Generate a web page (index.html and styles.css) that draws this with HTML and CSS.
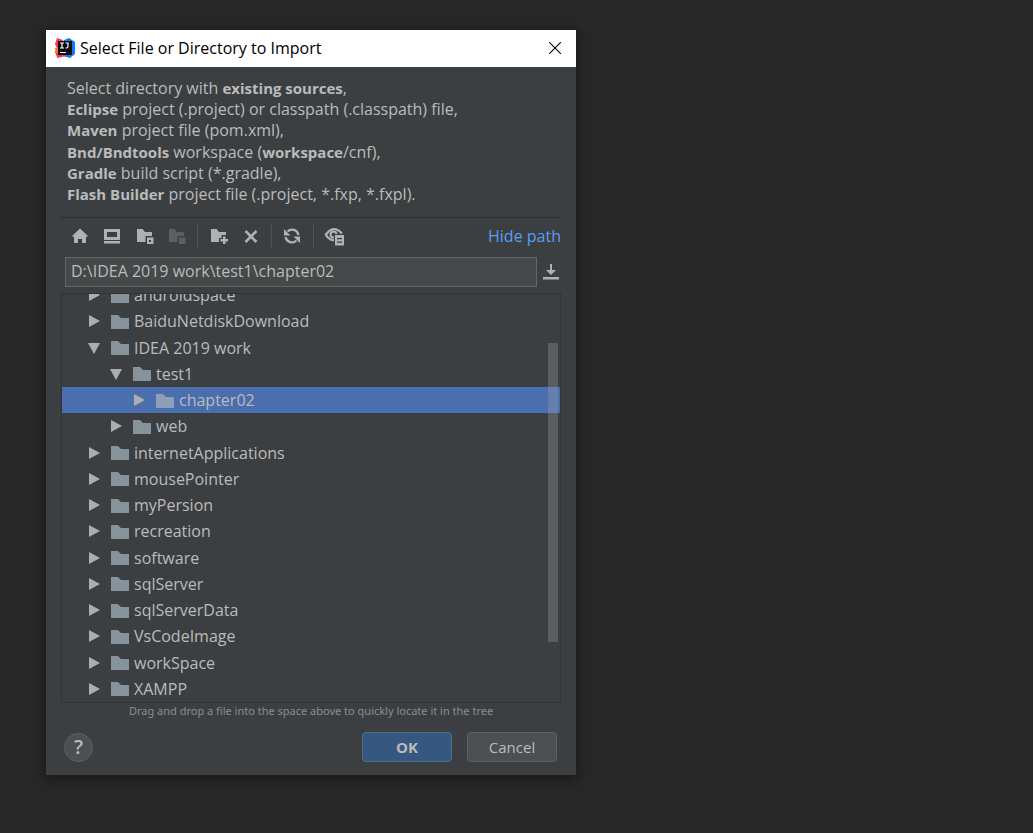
FILE: index.html
```html
<!DOCTYPE html>
<html lang="en">
<head>
<meta charset="utf-8">
<title>Select File or Directory to Import</title>
<link rel="stylesheet" href="styles.css">
</head>
<body>
<svg class="sprite" aria-hidden="true">
  <symbol id="folder" viewBox="0 0 18 15"><path d="M0 1h7l3 3h8v11H0z" fill="currentColor"/></symbol>
  <symbol id="closed" viewBox="0 0 12 12"><path d="M1 0L12 6L1 12z" fill="currentColor"/></symbol>
  <symbol id="open" viewBox="0 0 12 12"><path d="M0 1H12L6 12z" fill="currentColor"/></symbol>
</svg>
<main class="dialog" role="dialog" aria-labelledby="title">
  <header class="titlebar">
    <svg class="logo" viewBox="0 0 20 20" aria-hidden="true">
      <path d="M2 0L8 2L10 10L2 19L0 14L2 10L0 6z" fill="#fe315d"/>
      <path d="M0 10L5 9L4 16L1 15z" fill="#f97a12"/>
      <path d="M9 2L14 0L20 4V16L15 20L8 18z" fill="#087cfa"/>
      <path d="M2 15L9 14L11 18L2 20z" fill="#fe315d"/>
      <path d="M3 3h14v14H3z" fill="#0b0b0b"/>
      <path d="M5 5h4M7 5v5M5 10h4M10.500 5h3M13 5v3.500q0 1.500-1.500 1.500H10.500M5 14.500h6" fill="none" stroke="#fff" stroke-width="1.200"/>
    </svg>
    <h1 class="title" id="title">Select File or Directory to Import</h1>
    <button class="close" type="button" aria-label="Close"><svg width="12" height="12" viewBox="0 0 12 12"><path d="M0 0L12 12M12 0L0 12" stroke="#000" stroke-width="1.100"/></svg></button>
  </header>
  <div class="content">
    <div class="intro">
      <div>Select directory with <b>existing sources</b>,</div>
      <div><b>Eclipse</b> project (.project) or classpath (.classpath) file,</div>
      <div><b>Maven</b> project file (pom.xml),</div>
      <div><b>Bnd/Bndtools</b> workspace (<b>workspace</b>/cnf),</div>
      <div><b>Gradle</b> build script (*.gradle),</div>
      <div><b>Flash Builder</b> project file (.project, *.fxp, *.fxpl).</div>
    </div>
    <div class="toolbar">
      <button class="tool" type="button" aria-label="Home"><svg viewBox="0 0 20 20"><path d="M10 2.500L18.500 10.500H16V17H12V13H8V17H4V10.500H1.500z" fill="currentColor"/></svg></button>
      <button class="tool" type="button" aria-label="Desktop"><svg viewBox="0 0 20 20"><path fill-rule="evenodd" d="M2 3H18V14H2zM5 6V11H15V6zM2 15H18V17.500H2z" fill="currentColor"/></svg></button>
      <button class="tool" type="button" aria-label="Project directory"><svg viewBox="0 0 20 20"><path d="M3 3H8.500L11 6H18V10H11.500V16H3z" fill="currentColor"/><path fill-rule="evenodd" d="M13 11.500H19.500V18H13zM15 14V16H17V14z" fill="currentColor"/></svg></button>
      <button class="tool" type="button" aria-label="Module directory" disabled><svg viewBox="0 0 20 20"><path d="M3 3H8.500L11 6H18V10H11.500V16H3z" fill="currentColor"/><path d="M13 11.500H19.500V18H13z" fill="currentColor"/></svg></button>
      <span class="divider"></span>
      <button class="tool" type="button" aria-label="New folder"><svg viewBox="0 0 20 20"><path d="M3 3H8.500L11 6H18V9H13.500V12H11V16H3z" fill="currentColor"/><path d="M15 10.500H17.500V13H20V15.500H17.500V18H15V15.500H12.500V13H15z" fill="currentColor"/></svg></button>
      <button class="tool" type="button" aria-label="Delete"><svg viewBox="0 0 20 20"><path d="M5.500 5L16.500 16M16.500 5L5.500 16" stroke="currentColor" stroke-width="2.600"/></svg></button>
      <span class="divider"></span>
      <button class="tool" type="button" aria-label="Refresh"><svg viewBox="0 0 20 20"><path d="M5.500 5.500A6.500 6.500 0 0 1 16.500 9M14.500 14.500A6.500 6.500 0 0 1 3.500 11" fill="none" stroke="currentColor" stroke-width="2.300"/><path d="M2 3V9.500H8.500zM18 17V10.500H11.500z" fill="currentColor"/></svg></button>
      <span class="divider"></span>
      <button class="tool" type="button" aria-label="Show hidden files"><svg viewBox="0 0 20 20"><path d="M1.500 9Q9.500-2 18 7.500" fill="none" stroke="currentColor" stroke-width="2.200"/><path d="M1.500 8Q4 13.500 10 14.500" fill="none" stroke="currentColor" stroke-width="2.200"/><path d="M10 11.500A3 3 0 1 1 12.500 8" fill="none" stroke="currentColor" stroke-width="2.200"/><path fill-rule="evenodd" d="M11 9H20V19.500H11zM13 12V13.200H18V12zM13 15.500V16.700H18V15.500z" fill="currentColor"/></svg></button>
      <a class="path-link" href="#path">Hide path</a>
    </div>
    <div class="path-row">
      <input class="path" id="path" type="text" aria-label="Path" value="D:\IDEA 2019 work\test1\chapter02">
      <button class="history" type="button" aria-label="Recent paths"><svg width="16" height="16" viewBox="0 0 16 16"><path d="M7 0H9V6H13L8 11L3 6H7zM0 13H16V15.500H0z" fill="currentColor"/></svg></button>
    </div>
    <div class="panel">
      <ul class="tree" role="tree">
        <li class="row" role="treeitem"><svg class="arrow"><use href="#closed"/></svg><svg class="folder"><use href="#folder"/></svg>androidspace</li>
        <li class="row" role="treeitem"><svg class="arrow"><use href="#closed"/></svg><svg class="folder"><use href="#folder"/></svg>BaiduNetdiskDownload</li>
        <li class="row" role="treeitem"><svg class="arrow"><use href="#open"/></svg><svg class="folder"><use href="#folder"/></svg>IDEA 2019 work</li>
        <li class="row level-2" role="treeitem"><svg class="arrow"><use href="#open"/></svg><svg class="folder"><use href="#folder"/></svg>test1</li>
        <li class="row level-3 selected" role="treeitem" aria-selected="true"><svg class="arrow"><use href="#closed"/></svg><svg class="folder"><use href="#folder"/></svg>chapter02</li>
        <li class="row level-2" role="treeitem"><svg class="arrow"><use href="#closed"/></svg><svg class="folder"><use href="#folder"/></svg>web</li>
        <li class="row" role="treeitem"><svg class="arrow"><use href="#closed"/></svg><svg class="folder"><use href="#folder"/></svg>internetApplications</li>
        <li class="row" role="treeitem"><svg class="arrow"><use href="#closed"/></svg><svg class="folder"><use href="#folder"/></svg>mousePointer</li>
        <li class="row" role="treeitem"><svg class="arrow"><use href="#closed"/></svg><svg class="folder"><use href="#folder"/></svg>myPersion</li>
        <li class="row" role="treeitem"><svg class="arrow"><use href="#closed"/></svg><svg class="folder"><use href="#folder"/></svg>recreation</li>
        <li class="row" role="treeitem"><svg class="arrow"><use href="#closed"/></svg><svg class="folder"><use href="#folder"/></svg>software</li>
        <li class="row" role="treeitem"><svg class="arrow"><use href="#closed"/></svg><svg class="folder"><use href="#folder"/></svg>sqlServer</li>
        <li class="row" role="treeitem"><svg class="arrow"><use href="#closed"/></svg><svg class="folder"><use href="#folder"/></svg>sqlServerData</li>
        <li class="row" role="treeitem"><svg class="arrow"><use href="#closed"/></svg><svg class="folder"><use href="#folder"/></svg>VsCodeImage</li>
        <li class="row" role="treeitem"><svg class="arrow"><use href="#closed"/></svg><svg class="folder"><use href="#folder"/></svg>workSpace</li>
        <li class="row" role="treeitem"><svg class="arrow"><use href="#closed"/></svg><svg class="folder"><use href="#folder"/></svg>XAMPP</li>
      </ul>
      <span class="thumb"></span>
    </div>
    <p class="hint">Drag and drop a file into the space above to quickly locate it in the tree</p>
    <footer class="actions">
      <button class="help" type="button" aria-label="Help">?</button>
      <button class="button primary" type="button">OK</button>
      <button class="button" type="button">Cancel</button>
    </footer>
  </div>
</main>
</body>
</html>
```
FILE: styles.css
```css
* { box-sizing: border-box; }
body {
  margin: 0;
  padding: 30px 46px;
  background: #282828;
  color: #bbbbbb;
  font: 16px/20px "Open Sans", "Noto Sans", sans-serif;
}
button { padding: 0; border: 0; background: none; color: inherit; font: inherit; }
svg { display: block; flex: none; }
.sprite { position: absolute; width: 0; height: 0; }
.dialog {
  width: 530px;
  max-width: 100%;
  background: #3c3f41;
  box-shadow: 0 2px 12px 2px rgba(0, 0, 0, .4);
}
.titlebar {
  display: flex;
  align-items: center;
  height: 37px;
  padding: 0 15px 1px 9px;
  background: #fff;
  color: #000;
}
.logo { width: 20px; height: 20px; margin-right: 5px; }
.title { flex: 1; margin: 0; font-size: 16px; font-weight: 400; }
.content { padding: 10px 15px 13px; }
.intro {
  display: grid;
  grid-auto-rows: 1fr;
  align-items: center;
  min-height: 128px;
  margin: 0 6px 12px;
}
.intro b { font-size: 15px; line-height: 1; }
.toolbar {
  display: flex;
  align-items: center;
  height: 40px;
  padding: 0 0 3px 3px;
  border-top: 1px solid #2d2f30;
}
.tool { display: grid; place-items: center; width: 32px; height: 32px; color: #afb1b3; }
.tool svg { width: 20px; height: 20px; }
.tool:disabled { color: #5c5e60; }
.divider { width: 1px; height: 24px; margin: 0 4px 0 5px; background: #515151; }
.path-link { margin-left: auto; color: #589df6; text-decoration: none; }
.path-row { display: flex; align-items: center; padding: 0 2px 0 4px; }
.path {
  flex: 1;
  min-width: 0;
  height: 30px;
  padding: 0 5px 2px;
  border: 1px solid #646464;
  background: #45494a;
  color: #bbbbbb;
  font: inherit;
}
.history { margin-left: 6px; color: #afb1b3; }
.panel {
  position: relative;
  margin-top: 6px;
  overflow: hidden;
  border: 1px solid #323435;
}
.tree {
  display: grid;
  grid-auto-rows: 1fr;
  min-height: 420px;
  margin: -12px 0 0;
  padding: 0;
  list-style: none;
}
.row { display: flex; align-items: center; padding-left: 26px; }
.level-2 { padding-left: 48px; }
.level-3 { padding-left: 71px; }
.selected { background: #4b6eaf; }
.arrow { width: 12px; height: 12px; margin-right: 11px; color: #adadad; }
.folder { width: 18px; height: 15px; margin-right: 5px; color: #87939a; }
.selected .folder { color: #8f9fb8; }
.thumb {
  position: absolute;
  top: 49px;
  right: 2px;
  width: 10px;
  height: 299px;
  background: rgba(166, 166, 166, .3);
}
.hint { margin: 0; color: #8c8c8c; font-family: "Noto Sans", sans-serif; font-size: 11px; line-height: 16px; text-align: center; }
.actions { display: flex; align-items: center; gap: 15px; margin-top: 13px; padding: 0 4px 0 3px; }
.help {
  width: 29px;
  height: 29px;
  margin-right: auto;
  border: 1px solid #5e6060;
  border-radius: 50%;
  background: #4c5052;
  font-size: 20px;
  font-weight: 600;
}
.button {
  width: 90px;
  height: 30px;
  border: 1px solid #5e6060;
  border-radius: 4px;
  background: #4c5052;
  font-size: 15px;
}
.primary { border-color: #4c708c; background: #365880; font-weight: 700; }
```
